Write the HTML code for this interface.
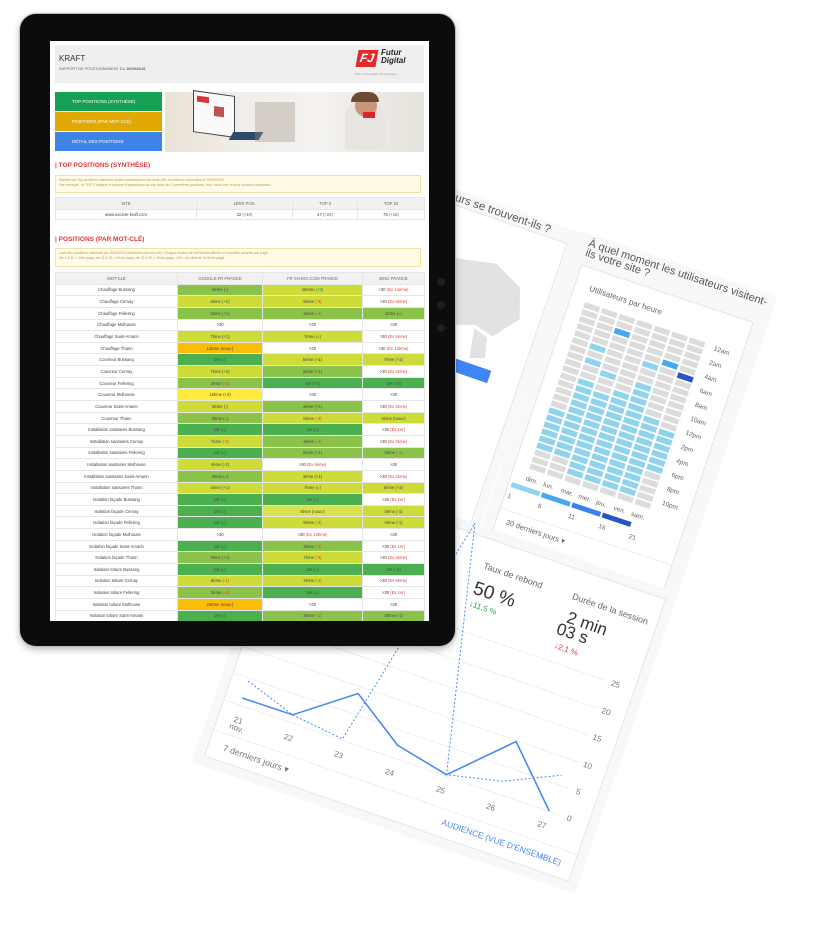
<!DOCTYPE html>
<html><head><meta charset="utf-8">
<style>
html,body{margin:0;padding:0;background:#fff;}
body{width:824px;height:949px;position:relative;overflow:hidden;font-family:"Liberation Sans",sans-serif;}
#bg{position:absolute;left:0;top:0;}
.tab{position:absolute;left:20px;top:14px;width:435px;height:632px;background:#0c0c0c;border-radius:16px;box-shadow:0 0 0 1px #bbb,0 3px 8px rgba(0,0,0,.3);}
.scr{position:absolute;left:50px;top:41px;width:379px;height:580px;background:#fff;overflow:hidden;}
.a{position:absolute;}
.hdr{left:5px;top:4px;width:369px;height:38px;background:#efefef;}
.nav{left:5px;width:107px;height:19px;color:#fff;font-size:4.5px;line-height:19px;text-indent:17px;}
.ttl{font-size:6.5px;color:#e8343a;font-weight:bold;left:5px;}
.note{left:5px;width:366px;background:#fffbe6;border:1px solid #f1e2a6;font-size:3.5px;color:#b59a57;font-style:italic;padding:2px 3px;box-sizing:border-box;line-height:5px;}
table{border-collapse:collapse;table-layout:fixed;position:absolute;font-size:4.2px;color:#444;text-align:center;}
td,th{padding:0;border:0.5px solid #e6e6e6;overflow:hidden;white-space:nowrap;}
th{background:#f1f1f1;font-weight:normal;color:#666;}
#kw tr{height:11.65px;}
.d{background:#4caf50}.m{background:#8bc34a}.l{background:#cddc39}.o{background:#fbbd08}.y{background:#ffeb3b}
.r{color:#e53935}.g{color:#2e7d32}
</style></head><body>
<svg id="bg" width="824" height="949" xmlns="http://www.w3.org/2000/svg" font-family="Liberation Sans, sans-serif">
<defs>
<pattern id="pg" width="18.5" height="7.4" patternUnits="userSpaceOnUse"><rect width="16" height="5.6" fill="#dcdcdc"/></pattern>
<pattern id="pb" width="18.5" height="7.4" patternUnits="userSpaceOnUse"><rect width="16" height="5.6" fill="#8fd3ee"/></pattern>
</defs>
<!-- left card -->
<g transform="translate(548,237) rotate(19)">
<rect x="-160" y="-15" width="190" height="320" fill="#f7f8f9"/>
<rect x="-150" y="0" width="170" height="300" fill="#fff" stroke="#e6e6e6"/>
<text x="0" y="-4" text-anchor="end" font-size="11.5" fill="#555">Où vos utilisateurs se trouvent-ils ?</text>
<path d="M-80,50 l40,-8 l30,15 l10,30 l-20,25 l-20,-5 l-30,10 l-20,-20z M-40,110 l15,5 l5,20 l-15,5z" fill="#e2e2e2"/>
<rect x="-90" y="145" width="80" height="13" fill="#3f85f4"/>
<text x="-30" y="290" font-size="8" fill="#4285f4">ZONES</text>
</g>
<!-- heatmap card -->
<g transform="translate(585,302) rotate(18.5)">
<rect x="-27" y="-66" width="208" height="330" fill="#f7f8f9"/>
<rect x="-15" y="-34" width="181" height="282" fill="#fff" stroke="#e4e4e4"/>
<text x="-15" y="-54" font-size="11" fill="#555">À quel moment les utilisateurs visitent-</text>
<text x="-15" y="-44" font-size="11" fill="#555">ils votre site ?</text>
<text x="0" y="-12" font-size="8" fill="#666">Utilisateurs par heure</text>
<rect x="0" y="0" width="129.5" height="177.6" fill="url(#pg)"/>
<rect x="0" y="111" width="18.5" height="44.4" fill="url(#pb)"/>
<rect x="18.5" y="37" width="18.5" height="7.4" fill="url(#pb)"/>
<rect x="18.5" y="51.8" width="18.5" height="7.4" fill="url(#pb)"/>
<rect x="18.5" y="74" width="18.5" height="81.4" fill="url(#pb)"/>
<rect x="37" y="59.2" width="18.5" height="7.4" fill="url(#pb)"/>
<rect x="37" y="81.4" width="18.5" height="88.8" fill="url(#pb)"/>
<rect x="55.5" y="74" width="18.5" height="96.2" fill="url(#pb)"/>
<rect x="74" y="37" width="18.5" height="7.4" fill="url(#pb)"/>
<rect x="74" y="59.2" width="18.5" height="111" fill="url(#pb)"/>
<rect x="92.5" y="88.8" width="18.5" height="81.4" fill="url(#pb)"/>
<rect x="111" y="96.2" width="18.5" height="44.4" fill="url(#pb)"/>
<rect x="37" y="14.8" width="16" height="5.6" fill="#45a8f0"/>
<rect x="92.5" y="29.6" width="16" height="5.6" fill="#45a8f0"/>
<rect x="111" y="37" width="16" height="5.6" fill="#2456c8"/>
<g font-size="6.5" fill="#666">
<text x="137" y="5">12am</text><text x="137" y="19.8">2am</text><text x="137" y="34.6">4am</text><text x="137" y="49.4">6am</text><text x="137" y="64.2">8am</text><text x="137" y="79">10am</text><text x="137" y="93.8">12pm</text><text x="137" y="108.6">2pm</text><text x="137" y="123.4">4pm</text><text x="137" y="138.2">6pm</text><text x="137" y="153">8pm</text><text x="137" y="167.8">10pm</text>
<text x="0" y="188">dim.</text><text x="18.5" y="188">lun.</text><text x="37" y="188">mar.</text><text x="55.5" y="188">mer.</text><text x="74" y="188">jeu.</text><text x="92.5" y="188">ven.</text><text x="111" y="188">sam.</text>
<text x="-12" y="210">1</text><text x="20" y="210">6</text><text x="52" y="210">11</text><text x="84" y="210">16</text><text x="116" y="210">21</text>
<text x="-5" y="236" font-size="7.5">30 derniers jours ▾</text>
</g>
<rect x="-12" y="194" width="30" height="5" fill="#8fd3ee"/><rect x="20" y="194" width="30" height="5" fill="#45a8f0"/><rect x="52" y="194" width="30" height="5" fill="#3d7ff0"/><rect x="84" y="194" width="30" height="5" fill="#2456c8"/>
<line x1="-15" y1="222" x2="166" y2="222" stroke="#eee"/>
</g>
<!-- bottom card -->
<g transform="translate(239,717) rotate(19)">
<rect x="-30" y="-260" width="405" height="318" fill="#f7f8f9"/>
<rect x="-20" y="-250" width="385" height="298" fill="#fff" stroke="#e6e6e6"/>
<g stroke="#ececec" stroke-width="0.8">
<line x1="-20" y1="-11.5" x2="335" y2="-11.5"/><line x1="-20" y1="-40" x2="335" y2="-40"/><line x1="-20" y1="-68" x2="335" y2="-68"/><line x1="-20" y1="-97" x2="335" y2="-97"/><line x1="-20" y1="-125" x2="335" y2="-125"/><line x1="-20" y1="-154" x2="335" y2="-154"/>
<line x1="-20" y1="20" x2="365" y2="20"/>
</g>
<polyline points="-3,-37 50,-19.5 105,-13 160,-260 215,-13 270,-25 324,-50" fill="none" stroke="#4a8af4" stroke-width="1" stroke-dasharray="2,2"/>
<polyline points="-3,-19 50,-19.5 105,-61 159,-25 215,-13 270,-67 324,-12" fill="none" stroke="#4a8af4" stroke-width="1.6"/>
<g font-size="8" fill="#777">
<text x="-4" y="6">21</text><text x="-6" y="14">nov.</text><text x="49" y="6">22</text><text x="102" y="6">23</text><text x="156" y="6">24</text><text x="210" y="6">25</text><text x="263" y="6">26</text><text x="317" y="6">27</text>
<text x="343" y="-9">0</text><text x="343" y="-37">5</text><text x="341" y="-65">10</text><text x="341" y="-94">15</text><text x="341" y="-122">20</text><text x="341" y="-151">25</text>
<text x="-5" y="37" font-size="9">7 derniers jours ▾</text>
</g>
<text x="226" y="36" font-size="8.5" fill="#4a8af4">AUDIENCE (VUE D'ENSEMBLE)</text>
<text x="330" y="37" font-size="10" fill="#4a8af4">›</text>
<text x="182" y="-220" font-size="9" fill="#666">Taux de rebond</text>
<text x="180" y="-193" font-size="19" fill="#333">50 %</text>
<text x="181" y="-180" font-size="8" fill="#2e9b4a">↓11,5 %</text>
<text x="276" y="-220" font-size="9" fill="#666">Durée de la session</text>
<text x="278" y="-196" font-size="17" fill="#333">2 min</text>
<text x="272" y="-182" font-size="17" fill="#333">03 s</text>
<text x="275" y="-168" font-size="8" fill="#e53935">↓2,1 %</text>
</g>
</svg>

<div class="tab">
<div class="a" style="left:417px;top:264px;width:8px;height:8px;border-radius:50%;background:#1e1e1e"></div>
<div class="a" style="left:417px;top:287px;width:8px;height:8px;border-radius:50%;background:#1e1e1e"></div>
<div class="a" style="left:417px;top:310px;width:8px;height:8px;border-radius:50%;background:#1e1e1e"></div>
</div>
<div class="scr">
<div class="a hdr">
<div class="a" style="left:4px;top:9px;font-size:8px;color:#333">KRAFT</div>
<div class="a" style="left:4px;top:22px;font-size:3.8px;color:#666">RAPPORT DE POSITIONNEMENT DU <b>26/09/2018</b></div>
<div class="a" style="left:302px;top:5px;width:20px;height:17px;background:#e32b2b;transform:skewX(-10deg);color:#fff;font-weight:bold;font-style:italic;font-size:12px;line-height:17px;text-align:center">FJ</div>
<div class="a" style="left:326px;top:4px;font-size:8px;line-height:8px;font-weight:bold;font-style:italic;color:#222">Futur<br>Digital</div>
<div class="a" style="left:300px;top:27px;font-size:3px;color:#999">Web et Nouvelles Technologies</div>
</div>
<div class="a nav" style="top:51px;background:#16a053">TOP POSITIONS (SYNTHÈSE)</div>
<div class="a nav" style="top:71px;background:#e2a803">POSITIONS (PAR MOT-CLÉ)</div>
<div class="a nav" style="top:91px;background:#3e83e8">DÉTAIL DES POSITIONS</div>
<div class="a" style="left:115px;top:51px;width:259px;height:60px;background:linear-gradient(90deg,#e9e2d6 0%,#f1eeea 30%,#f4f2ef 60%,#e6e2dc 100%)">
<div class="a" style="left:28px;top:1px;width:40px;height:40px;background:#fafafa;border:1px solid #444;transform:skewY(8deg)"><div class="a" style="left:3px;top:4px;width:12px;height:6px;background:#d33"></div><div class="a" style="left:20px;top:12px;width:10px;height:10px;background:#b55"></div></div>
<div class="a" style="left:66px;top:40px;width:30px;height:8px;background:#2d4a66;transform:skewX(-30deg)"></div>
<div class="a" style="left:90px;top:10px;width:40px;height:40px;background:#9c8f80;opacity:.35"></div>
<div class="a" style="left:180px;top:8px;width:40px;height:50px;border-radius:18px 18px 4px 4px;background:#e8e4e0"></div>
<div class="a" style="left:190px;top:3px;width:22px;height:22px;border-radius:50%;background:#c9967a"></div>
<div class="a" style="left:186px;top:0px;width:28px;height:10px;border-radius:10px 10px 0 0;background:#6d4a33"></div>
<div class="a" style="left:198px;top:20px;width:12px;height:6px;background:#d8262d"></div>
</div>
<div class="a ttl" style="top:121px">| TOP POSITIONS (SYNTHÈSE)</div>
<div class="a note" style="top:134px;height:18px">Nombre de Top positions obtenues toutes combinaisons de mots-clés et moteurs confondus le 26/09/2018<br>Par exemple : le TOP 3 indique le nombre d'apparitions du site dans les 3 premières positions, tous mots-clés et tous moteurs confondus.</div>
<table style="left:5px;top:156px;width:369px">
<colgroup><col style="width:141px"><col style="width:96px"><col style="width:65px"><col style="width:67px"></colgroup>
<tr style="height:12px"><th>SITE</th><th>1ÈRE POS.</th><th>TOP 3</th><th>TOP 10</th></tr>
<tr style="height:10px"><td>www.societe-kraft.com</td><td>32 <span class="g">(+10)</span></td><td>47 <span class="g">(+22)</span></td><td>75 <span class="g">(+16)</span></td></tr>
</table>
<div class="a ttl" style="top:195px">| POSITIONS (PAR MOT-CLÉ)</div>
<div class="a note" style="top:207px;height:19px">Liste des positions obtenues au 26/09/2018 (classées par mot-clé). Chaque moteur de recherche affiche 10 résultats naturels par page<br>De 1 à 10 = 1ère page, de 11 à 20 = 2ème page, de 21 à 30 = 3ème page, &gt;30 = au-delà de la 3ème page.</div>
<table id="kw" style="left:5px;top:231px;width:369px">
<colgroup><col style="width:122px"><col style="width:85px"><col style="width:100px"><col style="width:62px"></colgroup>
<tr><th>MOT-CLÉ</th><th>GOOGLE.FR FRANCE</th><th>FR.YAHOO.COM FRANCE</th><th>BING FRANCE</th></tr>
<tr><td>Chauffage Bussang</td><td class="m">9ème (-)</td><td class="l">10ème <span class="g">(+3)</span></td><td>&gt;30 <span class="r">(Ex 14ème)</span></td></tr>
<tr><td>Chauffage Cernay</td><td class="l">4ème <span class="g">(+5)</span></td><td class="l">5ème <span class="r">(-3)</span></td><td>&gt;30 <span class="r">(Ex 6ème)</span></td></tr>
<tr><td>Chauffage Fellering</td><td class="m">2ème (+1)</td><td class="m">2ème <span class="r">(-1)</span></td><td class="m">2ème (=)</td></tr>
<tr><td>Chauffage Mulhouse</td><td>&gt;30</td><td>&gt;30</td><td>&gt;30</td></tr>
<tr><td>Chauffage Saint-Amarin</td><td class="l">7ème (+1)</td><td class="l">7ème (=)</td><td>&gt;30 <span class="r">(Ex 5ème)</span></td></tr>
<tr><td>Chauffage Thann</td><td class="o">13ème (nouv.)</td><td>&gt;30</td><td>&gt;30 <span class="r">(Ex 13ème)</span></td></tr>
<tr><td>Couvreur Bussang</td><td class="d">1er (=)</td><td class="l">5ème (+1)</td><td class="l">7ème (+2)</td></tr>
<tr><td>Couvreur Cernay</td><td class="l">7ème (+2)</td><td class="m">2ème (+1)</td><td>&gt;30 <span class="r">(Ex 2ème)</span></td></tr>
<tr><td>Couvreur Fellering</td><td class="m">3ème <span class="r">(-2)</span></td><td class="d">1er (+1)</td><td class="d">1er (+3)</td></tr>
<tr><td>Couvreur Mulhouse</td><td class="y">18ème (+3)</td><td>&gt;30</td><td>&gt;30</td></tr>
<tr><td>Couvreur Saint-Amarin</td><td class="l">5ème (-)</td><td class="m">3ème (+1)</td><td>&gt;30 <span class="r">(Ex 2ème)</span></td></tr>
<tr><td>Couvreur Thann</td><td class="m">3ème (=)</td><td class="l">6ème <span class="r">(-3)</span></td><td class="l">4ème (nouv.)</td></tr>
<tr><td>Installation sanitaires Bussang</td><td class="d">1er (=)</td><td class="d">1er (=)</td><td>&gt;30 <span class="r">(Ex 1er)</span></td></tr>
<tr><td>Installation sanitaires Cernay</td><td class="l">7ème <span class="r">(-3)</span></td><td class="m">3ème <span class="r">(-1)</span></td><td>&gt;30 <span class="r">(Ex 3ème)</span></td></tr>
<tr><td>Installation sanitaires Fellering</td><td class="d">1er (=)</td><td class="m">2ème (+1)</td><td class="m">2ème <span class="r">(-1)</span></td></tr>
<tr><td>Installation sanitaires Mulhouse</td><td class="l">4ème (-2)</td><td>&gt;30 <span class="r">(Ex 4ème)</span></td><td>&gt;30</td></tr>
<tr><td>Installation sanitaires Saint-Amarin</td><td class="m">2ème (=)</td><td class="l">3ème (+1)</td><td>&gt;30 <span class="r">(Ex 2ème)</span></td></tr>
<tr><td>Installation sanitaires Thann</td><td class="l">4ème (+1)</td><td class="l">7ème (=)</td><td class="l">5ème (+2)</td></tr>
<tr><td>Isolation façade Bussang</td><td class="d">1er (=)</td><td class="d">1er (=)</td><td>&gt;30 <span class="r">(Ex 1er)</span></td></tr>
<tr><td>Isolation façade Cernay</td><td class="d">1er (=)</td><td class="l" style="background:#d9e34f">6ème (nouv.)</td><td class="l">3ème (-1)</td></tr>
<tr><td>Isolation façade Fellering</td><td class="d">1er (=)</td><td class="l">5ème <span class="r">(-3)</span></td><td class="l">4ème (-1)</td></tr>
<tr><td>Isolation façade Mulhouse</td><td>&gt;30</td><td>&gt;30 <span class="r">(Ex 13ème)</span></td><td>&gt;30</td></tr>
<tr><td>Isolation façade Saint-Amarin</td><td class="d">1er (=)</td><td class="m">2ème <span class="r">(-2)</span></td><td>&gt;30 <span class="r">(Ex 1er)</span></td></tr>
<tr><td>Isolation façade Thann</td><td class="m">3ème (+1)</td><td class="l">7ème <span class="r">(-3)</span></td><td>&gt;30 <span class="r">(Ex 4ème)</span></td></tr>
<tr><td>Isolation toiture Bussang</td><td class="d">1er (=)</td><td class="d">1er (=)</td><td class="d">1er (+1)</td></tr>
<tr><td>Isolation toiture Cernay</td><td class="l">9ème <span class="r">(-1)</span></td><td class="l">4ème <span class="r">(-1)</span></td><td>&gt;30 <span class="r">(Ex 6ème)</span></td></tr>
<tr><td>Isolation toiture Fellering</td><td class="m">3ème <span class="r">(-1)</span></td><td class="d">1er (=)</td><td>&gt;30 <span class="r">(Ex 1er)</span></td></tr>
<tr><td>Isolation toiture Mulhouse</td><td class="o">23ème (nouv.)</td><td>&gt;30</td><td>&gt;30</td></tr>
<tr><td>Isolation toiture Saint-Amarin</td><td class="d">1er (=)</td><td class="m">3ème <span class="r">(-1)</span></td><td class="m">3ème (-1)</td></tr>
</table>
</div>
</body></html>
